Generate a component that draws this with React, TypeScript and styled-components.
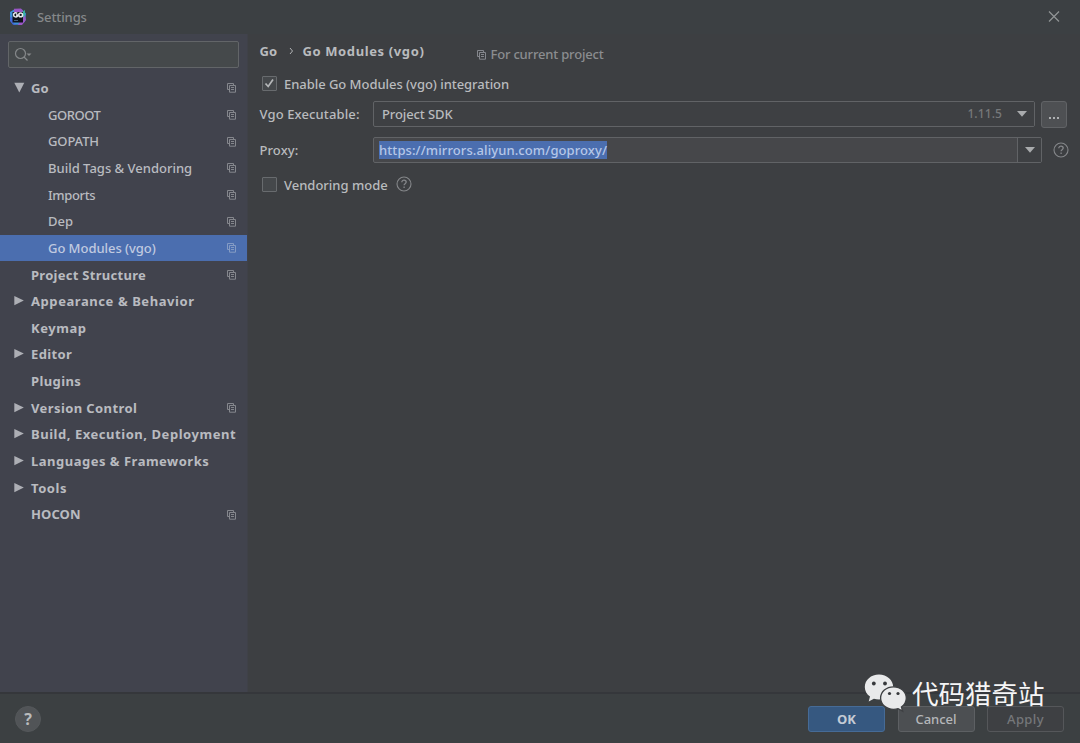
import React from 'react';
import styled, { createGlobalStyle } from 'styled-components';

const GlobalStyle = createGlobalStyle`
  * { box-sizing: border-box; }
  body { margin: 0; background: #3d3f42; }
`;

const Dialog = styled.div`
  width: 1080px;
  height: 743px;
  display: flex;
  flex-direction: column;
  position: relative;
  overflow: hidden;
  background: #3d3f42;
  color: #b9bbbe;
  font: 500 13px/18px 'Noto Sans', 'Noto Sans CJK SC', sans-serif;
  white-space: nowrap;
`;

const TitleBar = styled.header`
  height: 34px;
  flex: none;
  display: flex;
  align-items: center;
  padding: 0 20px 0 9px;
  background: #3c4043;
  color: #85888a;
`;

const Title = styled.span`
  margin: 0 auto 0 10px;
  letter-spacing: -0.1px;
`;

const Body = styled.div`
  height: 658px;
  flex: none;
  display: flex;
`;

const Sidebar = styled.nav`
  width: 248px;
  flex: none;
  background: #41434d;
  border-right: 1px solid #3f4148;
  padding-top: 7px;
`;

const Search = styled.div`
  width: 231px;
  height: 27px;
  margin: 0 0 6.6px 8px;
  display: flex;
  align-items: center;
  padding-left: 5px;
  background: #45494b;
  border: 1px solid #626568;
  border-radius: 2px;
`;

const Row = styled.div<{ $selected?: boolean }>`
  height: 26.67px;
  display: flex;
  align-items: center;
  padding: 0 10px 0 13px;
  color: ${p => (p.$selected ? '#c0cae0' : '#b9bbc0')};
  background: ${p => (p.$selected ? '#4b6eaf' : 'transparent')};
`;

const Arrow = styled.span`
  width: 18px;
  display: flex;
`;

const RowLabel = styled.span<{ $child?: boolean; $ls: number }>`
  margin-left: ${p => (p.$child ? 17 : 0)}px;
  margin-right: auto;
  font-weight: ${p => (p.$child ? 500 : 700)};
  letter-spacing: ${p => p.$ls}px;
`;

const Content = styled.main`
  flex: 1;
  padding: 7px 10px 0 11.5px;
`;

const Crumbs = styled.div`
  height: 20px;
  display: flex;
  align-items: center;
  font-weight: 700;
`;

const CrumbArrow = styled.span`
  margin: 0 8px 0 12px;
  display: flex;
`;

const Scope = styled.span`
  display: flex;
  align-items: center;
  gap: 3px;
  margin: 6px 0 0 52px;
  font-weight: 500;
  color: #8b8d90;
`;

const Line = styled.div<{ $h: number; $top: number }>`
  height: ${p => p.$h}px;
  margin-top: ${p => p.$top}px;
  display: flex;
  align-items: center;
`;

const Inline = styled.span<{ $left: number; $lift?: number }>`
  display: flex;
  margin-left: ${p => p.$left}px;
  margin-bottom: ${p => p.$lift ?? 0}px;
`;

const Check = styled.span`
  width: 15px;
  height: 15px;
  margin: 0 7px 2px 2.5px;
  display: flex;
  align-items: center;
  justify-content: center;
  background: #45484b;
  border: 1px solid #686b6e;
  border-radius: 1px;
`;

const Text = styled.span<{ $ls?: number }>`
  letter-spacing: ${p => p.$ls ?? 0}px;
`;

const FieldLabel = styled(Text)`
  width: 113.5px;
`;

const Combo = styled.div<{ $w: number; $filled?: boolean }>`
  width: ${p => p.$w}px;
  height: 26px;
  display: flex;
  align-items: center;
  padding-left: ${p => (p.$filled ? 5 : 8)}px;
  background: ${p => (p.$filled ? '#46474a' : '#3e4043')};
  border: 1px solid #616366;
  border-radius: 2px;
`;

const Version = styled.span`
  margin: 0 15px 0 auto;
  font-size: 12px;
  letter-spacing: 0.1px;
  color: #76787a;
`;

const Selection = styled.span`
  height: 18px;
  background: #4b6eaf;
  color: #b5c7e8;
  letter-spacing: 0.1px;
`;

const DropButton = styled.span<{ $split?: boolean }>`
  width: ${p => (p.$split ? 24 : 17)}px;
  height: 24px;
  margin-left: ${p => (p.$split ? 'auto' : '0')};
  display: flex;
  align-items: center;
  padding-left: ${p => (p.$split ? 6.5 : 0)}px;
  background: #3e4043;
  border-left: ${p => (p.$split ? '1px solid #616366' : '0')};
`;

const MoreButton = styled.button`
  width: 26px;
  height: 27px;
  margin-left: 6px;
  padding: 8px 0 0;
  display: flex;
  align-items: center;
  justify-content: center;
  gap: 2px;
  background: #4e5053;
  border: 1px solid #616366;
  border-radius: 3px;
`;

const Dot = styled.i`
  width: 2px;
  height: 2px;
  background: #aeb0b2;
`;

const Footer = styled.footer`
  height: 51px;
  flex: none;
  display: flex;
  align-items: flex-start;
  padding: 12px 16px 0 15px;
  background: #3c4042;
  border-top: 2px solid #35373b;
`;

const HelpButton = styled.button`
  width: 26px;
  height: 26px;
  margin-right: auto;
  padding: 0;
  border: 1px solid #55585b;
  border-radius: 50%;
  background: #515457;
  color: #b9bbbd;
  font: 700 16px/22px 'Noto Sans', sans-serif;
`;

const Button = styled.button<{ $kind?: 'primary' | 'disabled'; $ls?: number }>`
  width: 77px;
  height: 26px;
  margin: 0 0 0 12.5px;
  padding: 0;
  border-radius: 3px;
  border: 1px solid ${p => (p.$kind === 'primary' ? '#466b96' : p.$kind ? '#55575a' : '#5d6063')};
  background: ${p => (p.$kind === 'primary' ? '#365880' : p.$kind ? '#3e4043' : '#4c4f52')};
  color: ${p => (p.$kind === 'primary' ? '#c4cbd5' : p.$kind ? '#75777a' : '#b5b7ba')};
  font: ${p => (p.$kind === 'primary' ? 700 : 500)} 13px/18px 'Noto Sans', sans-serif;
  letter-spacing: ${p => p.$ls ?? 0}px;
`;

const Watermark = styled.div`
  position: absolute;
  left: 864px;
  top: 673px;
  display: flex;
  color: #f5f5f6;
  font: 400 26.5px/40px 'Noto Sans CJK SC', sans-serif;
`;

const WatermarkText = styled.span`
  margin-left: 5px;
`;

const CopyIcon = ({ color = '#85878d' }: { color?: string }) => (
  <svg width="11" height="11" viewBox="0 0 11 11" fill="none" stroke={color}>
    <path d="M3 7.500H1.500v-6h6V3" />
    <path d="M3.500 3.500h6v6.700h-6zM5 5.500h3M5 7.500h3" />
  </svg>
);

const Triangle = ({ open }: { open?: boolean }) => (
  <svg width="12" height="12" viewBox="0 0 12 12" fill="#adafb5">
    <path d={open ? 'M1.3.8h10L6.3 10.4z' : 'M1.3 1 10.8 5.600 1.300 10.200z'} />
  </svg>
);

const DownArrow = () => (
  <svg width="10" height="6" viewBox="0 0 10 6"><path d="M0 0h10L5 5.800z" fill="#a9abad" /></svg>
);

const HelpIcon = () => (
  <svg width="16" height="16" viewBox="0 0 16 16" fill="none" stroke="#85878a" strokeWidth="1.100">
    <circle cx="8" cy="8" r="7" />
    <path d="M5.800 6.200C5.800 3.400 10.300 3.500 10.200 6.100c0 1.600-2.100 1.700-2.100 3.200M8.100 10.500v1.400" strokeWidth="1.300" />
  </svg>
);

const GoLandIcon = () => (
  <svg width="18" height="18" viewBox="0 0 18 18">
    <path d="M1 4 6 1l7 .5 4 4-1 8-4 3.500-7-.500-4-5z" fill="#3d8fd8" />
    <path d="m5 .8 7-.2 3 3.400L5 5zM12 12l4-5 1 5-4 5H9z" fill="#9a55c6" />
    <path d="M1 9l3 1v5l4 2-4-.300L1 13z" fill="#4268dc" />
    <path d="m13 4 3-2v5l-2 3z" fill="#36b0a1" />
    <path d="M3.500 4h10.500v10.500H3.500z" fill="#10131a" />
    <path d="M8.300 5.400C6.500 4.200 4.500 5 4.600 7c.1 2.200 2.900 2.500 3.900 1V7H7" fill="none" stroke="#e8eaf0" strokeWidth="1.500" />
    <circle cx="11.700" cy="6.900" r="1.900" fill="none" stroke="#e8eaf0" strokeWidth="1.500" />
    <path d="M5 12.500h4" stroke="#47607a" />
  </svg>
);

const WeChatIcon = () => (
  <svg width="43" height="40" viewBox="0 0 43 40">
    <path d="M15 1.500C7 1.500.8 7 .8 14c0 4 2 7.300 5.200 9.600L4.700 28.500l5.200-2.800c1.700.5 3.300.7 5.100.7 8 0 14.200-5.500 14.200-12.300S23 1.500 15 1.500z" fill="#e9eaeb" />
    <path d="M29.500 13.800c-7.200 0-12.900 5-12.900 11.300s5.700 11.300 12.900 11.300c1.600 0 3.200-.2 4.600-.7l4.600 2.400-1.300-4.100c2.900-2 4.900-5.200 4.900-8.900 0-6.300-5.600-11.300-12.800-11.300z" fill="#e9eaeb" stroke="#3e4043" strokeWidth="1.300" />
    <g fill="#37393c"><circle cx="9.800" cy="10.500" r="1.900" /><circle cx="21" cy="10.500" r="1.900" /><circle cx="25.500" cy="20.500" r="1.600" /><circle cx="34" cy="20.500" r="1.600" /></g>
  </svg>
);

interface Item { label: string; child?: boolean; arrow?: 'open' | 'closed'; copy?: boolean; selected?: boolean; ls?: number }

const items: Item[] = [
  { label: 'Go', arrow: 'open', copy: true, ls: 0.2 },
  { label: 'GOROOT', child: true, copy: true, ls: -0.45 },
  { label: 'GOPATH', child: true, copy: true, ls: -0.1 },
  { label: 'Build Tags & Vendoring', child: true, copy: true },
  { label: 'Imports', child: true, copy: true, ls: -0.35 },
  { label: 'Dep', child: true, copy: true },
  { label: 'Go Modules (vgo)', child: true, copy: true, selected: true, ls: -0.05 },
  { label: 'Project Structure', copy: true, ls: 0.28 },
  { label: 'Appearance & Behavior', arrow: 'closed', ls: 0.57 },
  { label: 'Keymap', ls: 0.55 },
  { label: 'Editor', arrow: 'closed', ls: 0.35 },
  { label: 'Plugins', ls: 0.4 },
  { label: 'Version Control', arrow: 'closed', copy: true, ls: 0.4 },
  { label: 'Build, Execution, Deployment', arrow: 'closed', ls: 0.54 },
  { label: 'Languages & Frameworks', arrow: 'closed', ls: 0.5 },
  { label: 'Tools', arrow: 'closed', ls: 0.55 },
  { label: 'HOCON', copy: true, ls: 0.1 },
];

export default function App() {
  return (
    <Dialog>
      <GlobalStyle />
      <TitleBar>
        <GoLandIcon />
        <Title>Settings</Title>
        <svg width="12" height="12" viewBox="0 0 12 12" stroke="#929597" strokeWidth="1.200"><path d="m1 .5 10 10M11 .5 1 10.500" /></svg>
      </TitleBar>
      <Body>
        <Sidebar>
          <Search>
            <svg width="18" height="15" viewBox="0 0 18 15" fill="none" stroke="#85888a" strokeWidth="1.200">
              <circle cx="6.500" cy="6.500" r="5" /><path d="m10 10 3.500 3.500" /><path d="M12.500 6.500h5L15 9z" fill="#85888a" stroke="none" />
            </svg>
          </Search>
          {items.map(item => (
            <Row key={item.label} $selected={item.selected}>
              <Arrow>{item.arrow && <Triangle open={item.arrow === 'open'} />}</Arrow>
              <RowLabel $child={item.child} $ls={item.ls ?? 0}>{item.label}</RowLabel>
              {item.copy && <CopyIcon color={item.selected ? '#849bc4' : undefined} />}
            </Row>
          ))}
        </Sidebar>
        <Content>
          <Crumbs>
            <Text $ls={0.2}>Go</Text>
            <CrumbArrow><svg width="5" height="8" viewBox="0 0 5 8" fill="none" stroke="#b2b4b6"><path d="m1 1 2.500 3L1 7" /></svg></CrumbArrow>
            <Text $ls={0.62}>Go Modules (vgo)</Text>
            <Scope><CopyIcon /><Text $ls={-0.18}>For current project</Text></Scope>
          </Crumbs>
          <Line $h={20} $top={13}>
            <Check><svg width="11" height="11" viewBox="0 0 11 11" fill="none" stroke="#b5b7b9" strokeWidth="1.700"><path d="m1.500 5.500 2.700 3L9 1.500" /></svg></Check>
            <Text $ls={-0.04}>Enable Go Modules (vgo) integration</Text>
          </Line>
          <Line $h={26} $top={7}>
            <FieldLabel $ls={0.12}>Vgo Executable:</FieldLabel>
            <Combo $w={662}>
              <Text $ls={-0.1}>Project SDK</Text>
              <Version>1.11.5</Version>
              <DropButton><DownArrow /></DropButton>
            </Combo>
            <MoreButton><Dot /><Dot /><Dot /></MoreButton>
          </Line>
          <Line $h={26} $top={10}>
            <FieldLabel $ls={0.1}>Proxy:</FieldLabel>
            <Combo $w={669} $filled>
              <Selection>https://mirrors.aliyun.com/goproxy/</Selection>
              <DropButton $split><DownArrow /></DropButton>
            </Combo>
            <Inline $left={11}><HelpIcon /></Inline>
          </Line>
          <Line $h={20} $top={12}>
            <Check />
            <Text>Vendoring mode</Text>
            <Inline $left={8} $lift={2}><HelpIcon /></Inline>
          </Line>
        </Content>
      </Body>
      <Footer>
        <HelpButton>?</HelpButton>
        <Button $kind="primary">OK</Button>
        <Button>Cancel</Button>
        <Button $kind="disabled" $ls={0.4}>Apply</Button>
      </Footer>
      <Watermark><WeChatIcon /><WatermarkText>代码猎奇站</WatermarkText></Watermark>
    </Dialog>
  );
}
